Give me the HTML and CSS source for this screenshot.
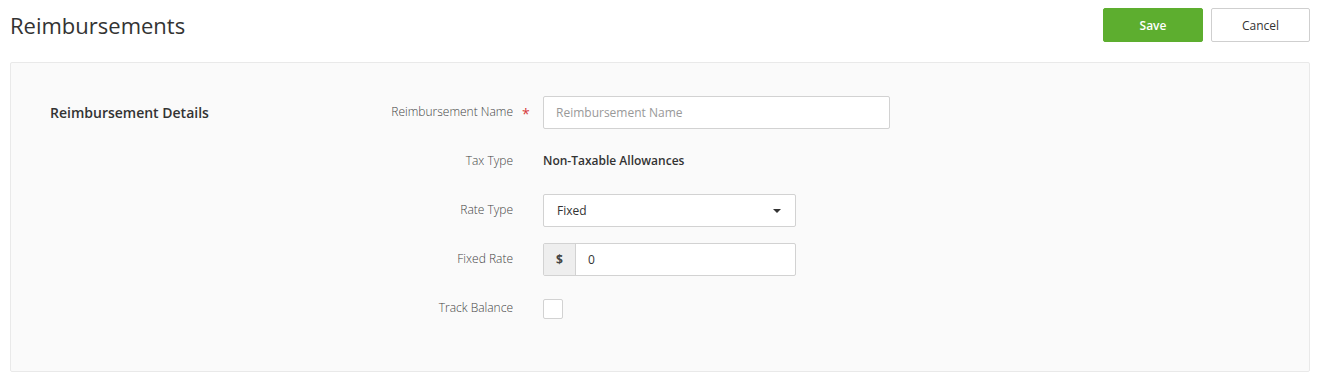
FILE: index.html
```html
<!DOCTYPE html>
<html>
<head>
<meta charset="utf-8">
<title>Reimbursements</title>
<link rel="stylesheet" href="styles.css">
</head>
<body>
<div class="page">
  <header class="header">
    <h1 class="title">Reimbursements</h1>
    <div class="actions">
      <button class="btn btn-primary">Save</button>
      <button class="btn btn-default">Cancel</button>
    </div>
  </header>
  <section class="panel">
    <div class="section-title">Reimbursement Details</div>
    <div class="form">
      <div class="label">Reimbursement Name</div>
      <div class="req">*</div>
      <div class="field"><input class="input input-wide" type="text" placeholder="Reimbursement Name"></div>

      <div class="label">Tax Type</div>
      <div class="req"></div>
      <div class="field"><span class="static">Non-Taxable Allowances</span></div>

      <div class="label">Rate Type</div>
      <div class="req"></div>
      <div class="field">
        <div class="select"><span>Fixed</span><span class="caret"></span></div>
      </div>

      <div class="label">Fixed Rate</div>
      <div class="req"></div>
      <div class="field">
        <div class="input-group"><span class="addon">$</span><span class="group-value">0</span></div>
      </div>

      <div class="label">Track Balance</div>
      <div class="req"></div>
      <div class="field"><span class="checkbox"></span></div>
    </div>
  </section>
</div>
</body>
</html>
```
FILE: styles.css
```css
* { box-sizing: border-box; }
html, body { margin: 0; padding: 0; background: #fff; }
body {
  font-family: "Open Sans", "Liberation Sans", sans-serif;
  color: #333;
}
.page {
  padding: 8px 9px 0 10px;
}
.header {
  display: flex;
  align-items: center;
  justify-content: space-between;
  height: 34px;
}
.title {
  margin: 0;
  font-size: 22px;
  font-weight: 400;
  color: #333;
  line-height: 34px;
}
.actions {
  display: flex;
  gap: 8px;
}
.btn {
  font-family: inherit;
  font-size: 12px;
  height: 34px;
  width: 100px;
  border-radius: 2px;
  cursor: pointer;
  padding: 0;
}
.btn-primary {
  background: #5dae2f;
  border: 1px solid #5dae2f;
  color: #fff;
  font-weight: 600;
}
.btn-default {
  background: #fff;
  border: 1px solid #cfcfcf;
  color: #333;
  width: 99px;
}
.panel {
  margin-top: 20px;
  background: #fafafa;
  border: 1px solid #e9e9e9;
  border-radius: 2px;
  height: 310px;
  display: flex;
  padding: 33px 0 0 39px;
}
.section-title {
  width: 290px;
  font-size: 14px;
  font-weight: 600;
  color: #333;
  line-height: 33px;
}
.form {
  display: grid;
  grid-template-columns: 173px 30px auto;
  grid-auto-rows: 33px;
  row-gap: 16px;
  align-items: center;
}
.label {
  text-align: right;
  font-size: 12px;
  font-weight: 300;
  color: #444;
  margin-top: -2px;
}
.req {
  color: #d63b3b;
  font-size: 14px;
  padding-left: 9px;
  line-height: 1;
  margin-top: 2px;
}
.field {
  display: flex;
  align-items: center;
}
.input {
  font-family: inherit;
  font-size: 12px;
  height: 33px;
  border: 1px solid #d2d2d2;
  border-radius: 2px;
  background: #fff;
  padding: 0 12px;
  color: #333;
  outline: none;
}
.input::placeholder { color: #999; }
.input-wide { width: 347px; }
.static {
  font-size: 12px;
  font-weight: 600;
  color: #333;
  margin-top: -2px;
}
.select {
  width: 253px;
  height: 33px;
  border: 1px solid #d2d2d2;
  border-radius: 2px;
  background: #fff;
  display: flex;
  align-items: center;
  justify-content: space-between;
  padding: 0 14px 0 13px;
  font-size: 12px;
  color: #333;
}
.caret {
  width: 0;
  height: 0;
  border-left: 4px solid transparent;
  border-right: 4px solid transparent;
  border-top: 4px solid #333;
}
.input-group {
  width: 253px;
  height: 33px;
  border: 1px solid #d2d2d2;
  border-radius: 2px;
  background: #fff;
  display: flex;
  align-items: stretch;
  font-size: 12px;
}
.addon {
  width: 32px;
  background: #eeeeee;
  border-right: 1px solid #d2d2d2;
  display: flex;
  align-items: center;
  justify-content: center;
  font-weight: 700;
  color: #444;
}
.group-value {
  display: flex;
  align-items: center;
  padding-left: 12px;
  color: #333;
}
.checkbox {
  width: 20px;
  height: 20px;
  border: 1px solid #d2d2d2;
  border-radius: 2px;
  background: #fff;
}
```
